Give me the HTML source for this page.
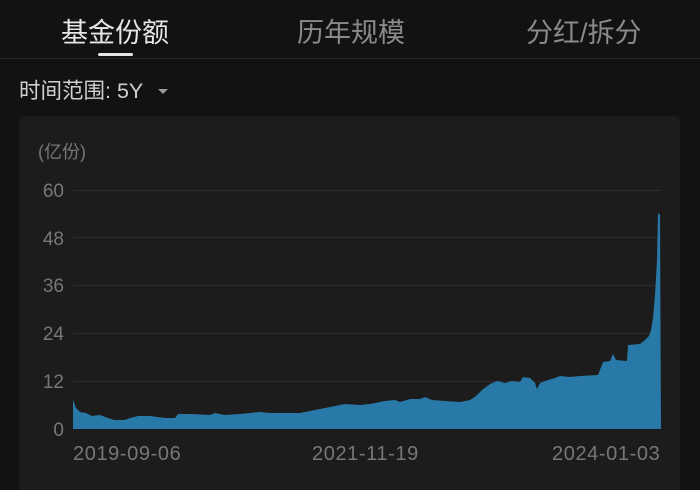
<!DOCTYPE html>
<html style="overflow:hidden;width:700px;height:490px"><head><meta charset="utf-8"><style>
body{margin:0;width:700px;height:490px;background:#121212;overflow:hidden;font-family:"Liberation Sans","Noto Sans CJK SC",sans-serif;position:relative}
.t{position:absolute;top:14px;font-size:27px;line-height:38px;color:#8a8a8a}
</style></head><body>
<div class="t" style="left:61px;color:#e6e6e6">基金份额</div>
<div class="t" style="left:297px">历年规模</div>
<div class="t" style="left:526px">分红/拆分</div>
<div style="position:absolute;left:98px;top:53px;width:35px;height:3px;background:#e6e6e6;border-radius:2px"></div>
<div style="position:absolute;left:0;top:58px;width:700px;height:1px;background:#2a2a2a"></div>
<div style="position:absolute;left:19px;top:77px;font-size:21.5px;line-height:28px;color:#d0d0d0">时间范围: 5Y</div>
<div style="position:absolute;left:158px;top:89px;width:0;height:0;border-left:5px solid transparent;border-right:5px solid transparent;border-top:5px solid #999"></div>
<div style="position:absolute;left:19px;top:116px;width:661px;height:374px;background:#1c1c1c;border-radius:6px 6px 0 0"></div>
<svg style="position:absolute;left:0;top:0" width="700" height="490">
<g font-family="Liberation Sans, Noto Sans CJK SC, sans-serif" font-size="19" fill="#777">
<text x="38" y="158" font-size="18">(亿份)</text>
<text x="64" y="197" text-anchor="end">60</text>
<text x="64" y="245" text-anchor="end">48</text>
<text x="64" y="292" text-anchor="end">36</text>
<text x="64" y="340" text-anchor="end">24</text>
<text x="64" y="388" text-anchor="end">12</text>
<text x="64" y="436" text-anchor="end">0</text>
<g font-size="20" letter-spacing="0.6">
<text x="73" y="460">2019-09-06</text>
<text x="312" y="460">2021-11-19</text>
<text x="552" y="460">2024-01-03</text>
</g>
</g>
<g stroke="#2c2c2c" stroke-width="1">
<line x1="73" y1="190.5" x2="661" y2="190.5"/><line x1="73" y1="237.5" x2="661" y2="237.5"/><line x1="73" y1="285.5" x2="661" y2="285.5"/><line x1="73" y1="333.5" x2="661" y2="333.5"/><line x1="73" y1="381.5" x2="661" y2="381.5"/>
</g>
<path fill="#2878a8" d="M73,429 L73,400 L76,408 L80,412 L86,413 L92,416 L100,415 L108,418 L114,420 L125,420 L130,418 L138,416 L150,416 L165,418 L175,418 L178,414 L190,414 L210,415 L215,413 L225,415 L240,414 L260,412 L270,413 L300,413 L315,410 L325,408 L335,406 L345,404 L360,405 L370,404 L385,401 L395,400 L400,402 L410,399 L420,399 L425,397 L432,400 L445,401 L460,402 L470,400 L476,396 L482,390 L490,384 L497,381 L505,383 L512,381 L520,382 L523,377 L530,378 L535,383 L537,389 L540,383 L548,380 L555,378 L560,376 L570,377 L580,376 L598,375 L603,362 L610,361 L613,354 L616,360 L627,361 L628,345 L640,344 L645,340 L649,336 L651,330 L653,318 L655,295 L657,260 L658,213 L660,215 L661,429 Z"/>
</svg>
</body></html>
